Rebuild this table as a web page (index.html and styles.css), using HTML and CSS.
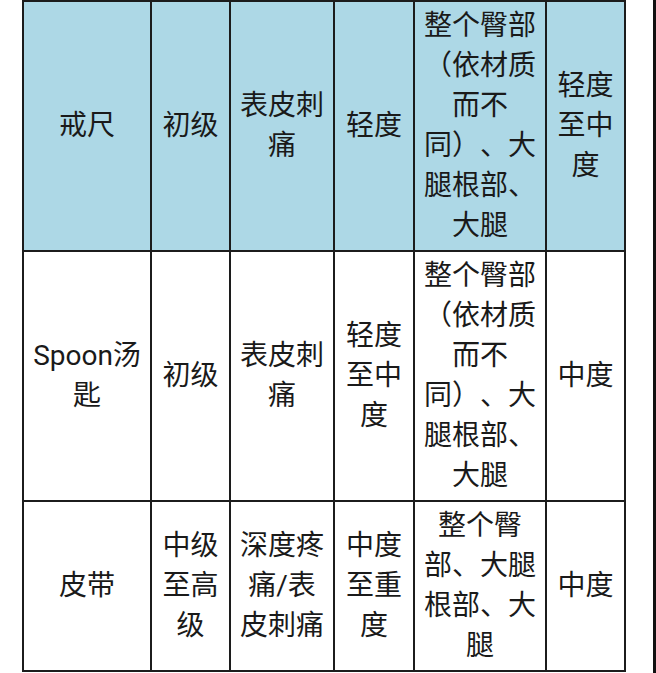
FILE: index.html
```html
<!DOCTYPE html>
<html lang="zh-CN">
<head>
<meta charset="utf-8">
<link rel="stylesheet" href="styles.css">
</head>
<body>
<div class="page">
  <table class="grid">
    <colgroup>
      <col class="c1"><col class="c2"><col class="c3"><col class="c4"><col class="c5"><col class="c6">
    </colgroup>
    <tr class="head">
      <td>戒尺</td>
      <td>初级</td>
      <td>表皮刺痛</td>
      <td>轻度</td>
      <td>整个臀部（依材质而不同）、大腿根部、大腿</td>
      <td>轻度至中度</td>
    </tr>
    <tr>
      <td>Spoon汤匙</td>
      <td>初级</td>
      <td>表皮刺痛</td>
      <td>轻度至中度</td>
      <td>整个臀部（依材质而不同）、大腿根部、大腿</td>
      <td>中度</td>
    </tr>
    <tr>
      <td>皮带</td>
      <td>中级至高级</td>
      <td>深度疼痛/表皮刺痛</td>
      <td>中度至重度</td>
      <td>整个臀部、大腿根部、大腿</td>
      <td>中度</td>
    </tr>
  </table>
</div>
</body>
</html>
```

FILE: styles.css
```css
html, body {
  margin: 0;
  padding: 0;
  background: #ffffff;
}

.page {
  box-sizing: border-box;
  width: 656px;
  height: 673px;
  overflow: hidden;
  padding-left: 22px;
  border-right: 3px solid #111111;
}

.grid {
  border-collapse: collapse;
  table-layout: fixed;
  width: 604px;
  font-family: Roboto, "Noto Sans CJK SC", sans-serif;
  font-size: 28px;
  line-height: 40px;
  color: #1a1a1a;
  text-spacing-trim: space-all;
}

.c1 { width: 128px; }
.c2 { width: 79px; }
.c3 { width: 104px; }
.c4 { width: 80px; }
.c5 { width: 132px; }
.c6 { width: 79px; }

.grid td {
  border: 2px solid #1c1c1c;
  padding: 4px 6px;
  text-align: center;
  vertical-align: middle;
  word-break: normal;
}

.head td {
  background: #add8e6;
}
```
